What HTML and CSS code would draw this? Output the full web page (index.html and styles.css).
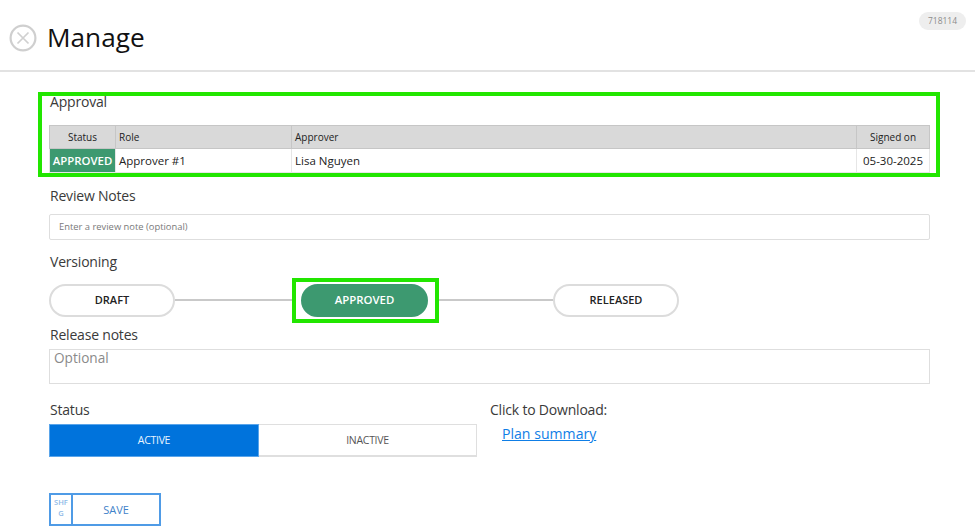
FILE: index.html
```html
<!DOCTYPE html>
<html lang="en">
<head>
<meta charset="utf-8">
<title>Manage</title>
<link rel="stylesheet" href="styles.css">
</head>
<body>
<header class="header">
  <svg class="close" width="28" height="28" viewBox="0 0 28 28" aria-hidden="true">
    <circle cx="14" cy="14" r="12.4" fill="none" stroke="#cfcfcf" stroke-width="2.2"/>
    <path d="M8.5 8.5 19.5 19.5M19.5 8.5 8.5 19.5" fill="none" stroke="#d0d0d0" stroke-width="1.7"/>
  </svg>
  <h1 class="title">Manage</h1>
  <span class="id-pill">718114</span>
</header>
<main class="content">
  <section class="approval">
    <div class="label approval-label">Approval</div>
    <table class="table">
      <colgroup>
        <col class="col-status"><col class="col-role"><col class="col-approver"><col class="col-signed">
      </colgroup>
      <thead>
        <tr><th class="center">Status</th><th>Role</th><th>Approver</th><th class="center">Signed on</th></tr>
      </thead>
      <tbody>
        <tr><td class="status-cell">APPROVED</td><td>Approver #1</td><td>Lisa Nguyen</td><td class="center">05-30-2025</td></tr>
      </tbody>
    </table>
  </section>

  <div class="label notes-label">Review Notes</div>
  <div class="note-input">Enter a review note (optional)</div>

  <div class="label version-label">Versioning</div>
  <div class="stepper">
    <div class="step">DRAFT</div>
    <div class="line line-a"></div>
    <div class="step-box"><div class="step step-active">APPROVED</div></div>
    <div class="line line-b"></div>
    <div class="step">RELEASED</div>
  </div>

  <div class="label release-label">Release notes</div>
  <div class="release-input">Optional</div>

  <div class="bottom">
    <div class="status-col">
      <div class="label">Status</div>
      <div class="toggle">
        <div class="toggle-on">ACTIVE</div>
        <div class="toggle-off">INACTIVE</div>
      </div>
    </div>
    <div class="download">
      <div class="label download-label">Click to Download:</div>
      <a class="link" href="#">Plan summary</a>
    </div>
  </div>

  <div class="save">
    <div class="save-key">SHF<br>G</div>
    <div class="save-text">SAVE</div>
  </div>
</main>
</body>
</html>
```

FILE: styles.css
```css
* { box-sizing: border-box; }
html, body { margin: 0; padding: 0; }
body {
  width: 975px;
  height: 527px;
  overflow: hidden;
  background: #fff;
  color: #333;
  font-family: "Open Sans", "Liberation Sans", sans-serif;
}
.header {
  position: relative;
  display: flex;
  align-items: center;
  height: 72px;
  padding: 6px 0 0 9px;
  border-bottom: 2px solid #e2e2e2;
}
.close { flex: none; }
.title {
  margin: 0 0 2px 10px;
  font-size: 26.2px;
  font-weight: 400;
  color: #111;
  line-height: 36px;
}
.id-pill {
  position: absolute;
  top: 12px;
  left: 919px;
  width: 47px;
  height: 18px;
  border-radius: 9px;
  background: #eeeeee;
  color: #8c8c8c;
  font-size: 8.5px;
  line-height: 18px;
  text-align: center;
}
.content {
  padding: 0 45px 0 49px;
}
.label {
  padding-left: 1px;
  font-size: 14px;
  line-height: 20px;
  letter-spacing: -0.2px;
  color: #3a3a3a;
}
.approval {
  width: 902px;
  height: 85px;
  margin: 20px 0 0 -11px;
  padding: 0 7px;
  border: 4px solid #22e600;
}
.approval-label { margin-top: -4px; }
.table {
  width: 880px;
  margin-top: 13px;
  border-collapse: collapse;
  table-layout: fixed;
  font-size: 11.5px;
  color: #222;
}
.col-status { width: 66px; }
.col-role { width: 176px; }
.col-approver { width: 565px; }
.col-signed { width: 73px; }
.table th, .table td {
  height: 24px;
  padding: 0 3px;
  border: 1px solid #cfcfcf;
  text-align: left;
  white-space: nowrap;
}
.table th {
  height: 23px;
  background: #d9d9d9;
  font-size: 10px;
  font-weight: 400;
  border-color: #c6c6c6;
}
.table td { border-color: #e6e6e6; }
.table .center { text-align: center; }
.table .status-cell {
  padding: 0;
  background: #3d9970;
  color: #fff;
  font-weight: 600;
  text-align: center;
  font-size: 11.4px;
}
.notes-label { margin-top: 9px; }
.note-input {
  width: 881px;
  height: 26px;
  margin-top: 8px;
  padding-left: 9px;
  border: 1px solid #dedede;
  border-radius: 2px;
  font-size: 9.4px;
  line-height: 24px;
  color: #7a7a7a;
}
.version-label { margin-top: 12px; }
.stepper {
  display: flex;
  align-items: center;
  height: 45px;
  margin-top: 6px;
}
.step {
  flex: none;
  width: 126px;
  height: 33px;
  border: 2px solid #dcdcdc;
  border-radius: 17px;
  background: #fff;
  color: #222;
  font-size: 11px;
  font-weight: 600;
  line-height: 28px;
  text-align: center;
}
.step-active {
  width: 127px;
  border-color: #3d9970;
  background: #3d9970;
  color: #fff;
  font-size: 11.4px;
}
.step-box {
  flex: none;
  display: flex;
  align-items: center;
  justify-content: center;
  width: 147px;
  height: 45px;
  padding-right: 2px;
  border: 4px solid #22e600;
}
.line { flex: none; height: 2px; margin-bottom: 1px; background: #c9c9c9; }
.line-a { width: 117px; }
.line-b { width: 114px; }
.release-label { margin-top: 2px; }
.release-input {
  width: 881px;
  height: 35px;
  margin-top: 4px;
  padding-left: 4px;
  border: 1px solid #dedede;
  font-size: 13.6px;
  line-height: 16px;
  color: #8a8a8a;
}
.bottom {
  display: flex;
  margin-top: 16px;
}
.status-col { flex: none; width: 441px; }
.toggle {
  display: flex;
  width: 428px;
  height: 33px;
  margin-top: 4px;
  font-size: 10.5px;
  text-align: center;
}
.toggle-on {
  flex: none;
  width: 210px;
  background: #0073dc;
  border: 1px solid #5aa5ea;
  line-height: 31px;
  color: #e8f3ff;
  letter-spacing: -0.3px;
}
.toggle-off {
  flex: 1;
  border: 1px solid #dfdfdf;
  border-bottom-width: 2px;
  border-left: 0;
  line-height: 30px;
  color: #555;
  letter-spacing: -0.3px;
}
.download-label { padding-left: 0; }
.link {
  display: block;
  margin: 4px 0 0 12px;
  font-size: 14.1px;
  line-height: 20px;
  color: #0f7ee6;
}
.save {
  display: flex;
  width: 112px;
  height: 33px;
  margin-top: 36px;
  border: 2px solid #4f9be6;
}
.save-key {
  flex: none;
  width: 22px;
  border-right: 2px solid #4f9be6;
  padding-top: 2px;
  font-size: 7.5px;
  font-weight: 600;
  line-height: 11px;
  text-align: center;
  color: #8db9e8;
}
.save-text {
  flex: 1;
  font-size: 11px;
  font-weight: 500;
  line-height: 29px;
  text-align: center;
  color: #3f82c9;
}
```
